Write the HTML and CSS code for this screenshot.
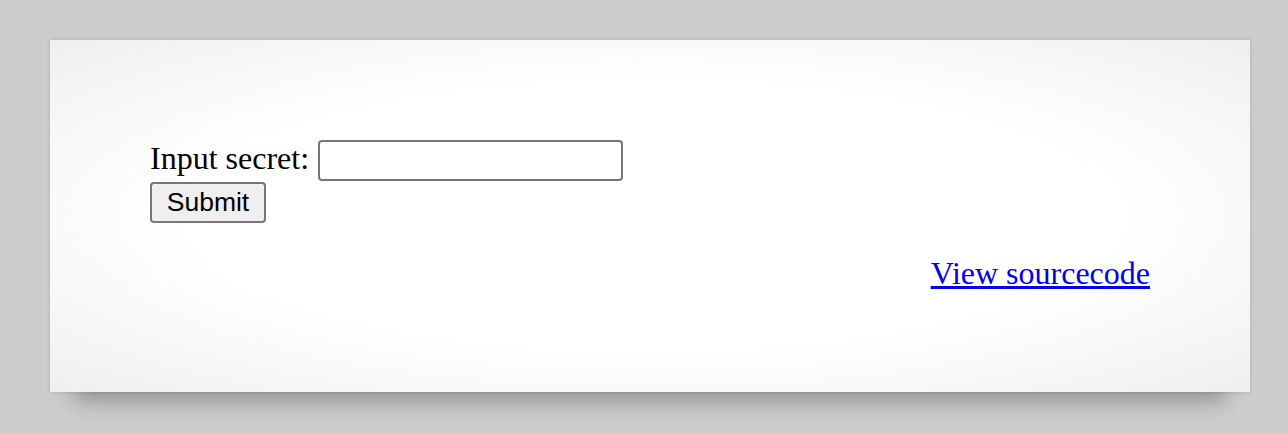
FILE: index.html
```
<!DOCTYPE html>
<html lang="en">
<head>
    <meta charset="UTF-8">
    <title>natas</title>
    <link rel="stylesheet" href="styles.css">
</head>
<body>
    <div id="content">
        <form method="post" class="secret-form">
            Input secret: <input name="secret" class="secret-input"><br>
            <input type="submit" name="submit" value="Submit" class="submit-btn">
        </form>

        <div id="viewsource"><a href="index-source.html">View sourcecode</a></div>
    </div>
</body>
</html>
```

FILE: styles.css
```
* {
    box-sizing: border-box;
}

html {
    background: #cccccc;
}

body {
    margin: 0;
    padding: 40px 0 43px 50px;
    font-family: "Liberation Serif", "Times New Roman", serif;
    font-size: 32px;
    color: #000;
}

#content {
    position: relative;
    width: 1200px;
    padding: 100px;
    background: radial-gradient(ellipse at center, #ffffff 55%, #efefef 100%);
    box-shadow: 0 0 4px rgba(0, 0, 0, 0.15);
}

/* lifted shadow under the card */
#content::before {
    content: '';
    position: absolute;
    left: 24px;
    right: 24px;
    bottom: 2px;
    height: 40px;
    z-index: -1;
    box-shadow: 0 12px 20px rgba(0, 0, 0, 0.26);
}

.secret-form {
    margin: 0 0 32px;
}

.secret-input {
    width: 305px;
    height: 41px;
    margin-left: 1px;
    border: 2px solid #767676;
    border-radius: 4px;
    background: #fff;
    font-size: 26px;
    vertical-align: baseline;
    padding: 2px 4px;
}

.submit-btn {
    width: 116px;
    height: 41px;
    margin-top: 1px;
    font-family: "Liberation Sans", Arial, sans-serif;
    font-size: 26.5px;
    color: #000;
    background: #efefef;
    border: 2px solid #767676;
    border-radius: 4px;
    padding: 0;
}

#viewsource {
    text-align: right;
}

#viewsource a {
    color: #0000ee;
}
```
